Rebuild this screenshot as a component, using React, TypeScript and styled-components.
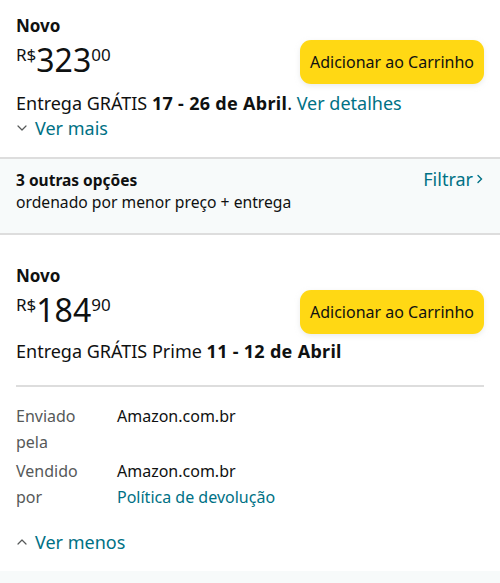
import styled, { createGlobalStyle } from 'styled-components';

const GlobalStyle = createGlobalStyle`
  body {
    margin: 0;
    background: #ffffff;
    font-family: 'Noto Sans', Roboto, sans-serif;
    color: #0f1111;
  }
`;

const Chevron = ({ up }: { up?: boolean }) => (
  <svg width="12" height="12" viewBox="0 0 12 12" fill="none">
    <path
      d={up ? 'M2 8 L6 4 L10 8' : 'M2 4 L6 8 L10 4'}
      stroke="#565959"
      strokeWidth="1.2"
      strokeLinecap="round"
      strokeLinejoin="round"
    />
  </svg>
);

const OfferTop = ({ price, cents }: { price: string; cents: string }) => (
  <>
    <Condition>Novo</Condition>
    <PriceRow>
      <Price>
        <Sup>R$</Sup>
        <Whole>{price}</Whole>
        <Sup>{cents}</Sup>
      </Price>
      <CartButton>Adicionar ao Carrinho</CartButton>
    </PriceRow>
  </>
);

const App = () => {
  return (
    <Page>
      <GlobalStyle />
      <Section>
        <OfferTop price="323" cents="00" />
        <Delivery>
          Entrega GRÁTIS <b>17 - 26 de Abril</b>. <Link>Ver detalhes</Link>
        </Delivery>
        <Toggle>
          <Chevron />
          <span>Ver mais</span>
        </Toggle>
      </Section>

      <OptionsBar>
        <div>
          <OptionsTitle>3 outras opções</OptionsTitle>
          <OptionsSub>ordenado por menor preço + entrega</OptionsSub>
        </div>
        <Filter>
          Filtrar
          <svg width="8" height="12" viewBox="0 0 8 12" fill="none">
            <path d="M2 2.5 L5.5 6 L2 9.5" stroke="#007185" strokeWidth="1.4" strokeLinecap="round" />
          </svg>
        </Filter>
      </OptionsBar>

      <Section $top={30}>
        <OfferTop price="184" cents="90" />
        <Delivery $top={4}>
          Entrega GRÁTIS Prime <b>11 - 12 de Abril</b>
        </Delivery>
        <Divider />
        <Details>
          <Label>Enviado pela</Label>
          <Value>Amazon.com.br</Value>
          <Label>Vendido por</Label>
          <Value>
            Amazon.com.br
            <br />
            <Link>Política de devolução</Link>
          </Value>
        </Details>
        <Toggle $top={19}>
          <Chevron up />
          <span>Ver menos</span>
        </Toggle>
      </Section>
      <Footer />
    </Page>
  );
};

const Page = styled.div`
  width: 500px;
  min-height: 583px;
  display: flex;
  flex-direction: column;
`;

const Section = styled.section<{ $top?: number }>`
  padding: ${(p) => p.$top ?? 15}px 16px 0;
  display: flex;
  flex-direction: column;
`;

const Condition = styled.div`
  font-size: 17px;
  font-weight: 700;
  line-height: 22px;
`;

const PriceRow = styled.div`
  display: flex;
  align-items: flex-start;
  justify-content: space-between;
  margin-top: 2px;
`;

const Price = styled.div`
  display: flex;
  align-items: flex-start;
  padding-top: 2px;
`;

const Sup = styled.span`
  font-size: 17px;
  line-height: 20px;
  margin-top: 4px;
`;

const Whole = styled.span`
  font-size: 32px;
  line-height: 38px;
`;

const CartButton = styled.button`
  width: 184px;
  height: 44px;
  margin: 1px 0 1px;
  border: none;
  border-radius: 11px;
  background: #ffd814;
  box-shadow: 0 2px 5px rgba(213, 217, 217, 0.5);
  font-family: inherit;
  font-size: 16px;
  color: #0f1111;
  padding: 0;
`;

const Delivery = styled.div<{ $top?: number }>`
  font-size: 18px;
  line-height: 24px;
  margin-top: ${(p) => p.$top ?? 6}px;
  b {
    font-weight: 700;
    letter-spacing: 0.3px;
  }
`;

const Link = styled.span`
  color: #007185;
`;

const Toggle = styled.div<{ $top?: number }>`
  display: flex;
  align-items: center;
  gap: 7px;
  color: #007185;
  font-size: 18px;
  line-height: 26px;
  margin-top: ${(p) => p.$top ?? 0}px;
  padding-bottom: 16px;
`;

const OptionsBar = styled.div`
  display: flex;
  justify-content: space-between;
  align-items: flex-start;
  background: #f7fafa;
  border-top: 2px solid #dddddd;
  border-bottom: 2px solid #dddddd;
  padding: 10px 16px 19px;
`;

const OptionsTitle = styled.div`
  font-size: 15.5px;
  font-weight: 700;
  line-height: 22px;
`;

const OptionsSub = styled.div`
  font-size: 15.7px;
  line-height: 23px;
`;

const Filter = styled.div`
  display: flex;
  align-items: center;
  gap: 3px;
  color: #007185;
  font-size: 18px;
  line-height: 20px;
`;

const Divider = styled.div`
  height: 2px;
  background: #dddddd;
  margin: 22px 0 16px;
`;

const Details = styled.div`
  display: grid;
  grid-template-columns: 101px 1fr;
  row-gap: 3px;
  font-size: 16px;
  line-height: 26px;
`;

const Label = styled.div`
  color: #565959;
  width: 70px;
`;

const Value = styled.div`
  color: #0f1111;
`;

const Footer = styled.div`
  flex: 1;
  background: #f7fafa;
  min-height: 10px;
`;

export default App;
